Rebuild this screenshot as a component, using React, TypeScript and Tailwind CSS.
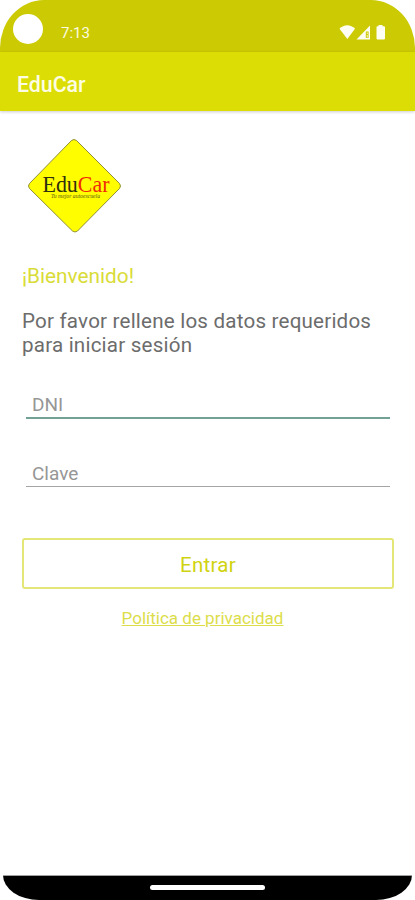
import React from "react";

const StatusBar: React.FC = () => {
  return (
    <div className="flex h-[52px] items-start rounded-t-[44px_48px] bg-[#cbca03] pl-[13px] pr-7">
      <span className="mt-3.5 h-[30px] w-[30px] rounded-full bg-white" />
      <span className="ml-[18px] mt-[23px] text-[15px] leading-5 text-[#fdfce0]">
        7:13
      </span>
      <svg
        className="ml-auto mt-6 h-4 w-12"
        viewBox="0 0 48 16"
        fill="#fffef2"
      >
        <path d="M0.5 4.8C4.7 0.1 11.8 0.1 16 4.8L8.3 15Z" />
        <path
          fillRule="evenodd"
          d="M31 1.5V15.5H17.5ZM26.8 7.5V14H29.6V7.5ZM27.8 8.5H28.6V10H27.8ZM27.8 11H28.6V13.4H27.8Z"
        />
        <path d="M39.5 2.2V1H43.5V2.2H45Q46 2.2 46 3.2V14.5Q46 15.5 45 15.5H38.5Q37.5 15.5 37.5 14.5V3.2Q37.5 2.2 38.5 2.2Z" />
      </svg>
    </div>
  );
};

const Logo: React.FC = () => {
  return (
    <svg className="h-24 w-24" viewBox="0 0 96 96">
      <path
        d="M44.5 2.5Q47 0.5 49.5 2.5L92.5 45.5Q94.5 48 92.5 50.5L50.5 93Q48 95 45.5 93L2.5 50.5Q0.5 48 2.5 45.5Z"
        fill="#fffd00"
        stroke="#8f8f38"
        strokeWidth="1"
      />
      <text
        x="15.5"
        y="54"
        textLength="67"
        lengthAdjust="spacingAndGlyphs"
        fontFamily="Liberation Serif, serif"
        fontSize="22.5"
        fill="#2e2e10"
      >
        Edu<tspan fill="#f02a08">Car</tspan>
      </text>
      <text
        x="24"
        y="60"
        textLength="49"
        lengthAdjust="spacingAndGlyphs"
        fontFamily="Liberation Serif, serif"
        fontSize="5.5"
        fontStyle="italic"
        fill="#55551a"
      >
        Tu mejor autoescuela
      </text>
    </svg>
  );
};

const LoginForm: React.FC = () => {
  return (
    <form className="flex flex-col">
      <div className="mx-1 mt-[27px]">
        <input
          className="block h-[35px] w-full border-b-2 border-[#71a293] px-1.5 pt-[7px] text-[19px] text-[#5f5f5f] outline-none placeholder:text-[#969696]"
          type="text"
          id="dni"
          placeholder="DNI"
        />
      </div>
      <div className="mx-1 mt-8">
        <input
          className="block h-9 w-full border-b border-[#a5a5a5] px-1.5 pt-[9px] text-[19px] text-[#5f5f5f] outline-none placeholder:text-[#969696]"
          type="password"
          id="clave"
          placeholder="Clave"
        />
      </div>
      <button
        className="mt-[51px] h-[51px] rounded-[3px] border-2 border-[#e5e678] pt-1 text-[20.5px] tracking-[0.3px] text-[#d0d310]"
        type="button"
      >
        Entrar
      </button>
      <a
        className="mr-[11px] mt-[17px] self-center text-[17px] leading-6 text-[#dcdd4a] underline"
        href="#privacidad"
      >
        Política de privacidad
      </a>
    </form>
  );
};

const App: React.FC = () => {
  return (
    <div className="flex h-[900px] w-[415px] flex-col bg-white font-['Roboto',sans-serif]">
      <StatusBar />
      <header className="flex h-[59px] items-center bg-[#dcdd04] pl-[17px] pt-1.5 shadow-[0_1px_3px_rgba(0,0,0,0.2)]">
        <h1 className="text-[21.3px] font-medium text-[#fdfde4]">EduCar</h1>
      </header>
      <main className="flex flex-1 flex-col pl-[22px] pr-[21px] pt-[27px]">
        <div className="pl-[5px]">
          <Logo />
        </div>
        <h2 className="mt-7 text-[20.8px] leading-7 text-[#d9dc38]">
          ¡Bienvenido!
        </h2>
        <p className="mt-[19px] text-[20.6px] leading-6 tracking-[0.2px] text-[#6c6c6c]">
          Por favor rellene los datos requeridos para iniciar sesión
        </p>
        <LoginForm />
      </main>
      <footer className="px-[3px]">
        <div className="flex h-[25px] justify-center rounded-b-[36px_25px] border-t border-[#a0a0a0] bg-black pt-[9px]">
          <span className="h-[5px] w-[115px] rounded-full bg-white" />
        </div>
      </footer>
    </div>
  );
};

export default App;
